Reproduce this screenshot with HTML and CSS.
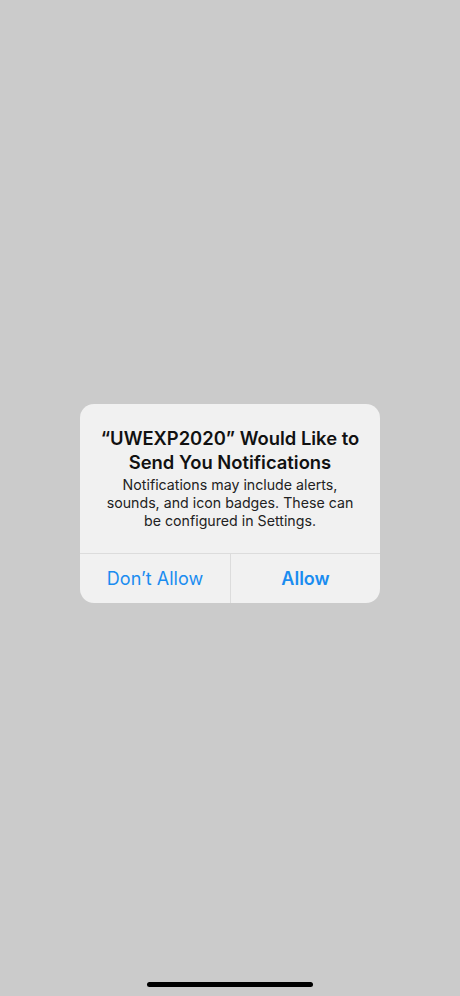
FILE: index.html
```html
<!DOCTYPE html>
<html lang="en">
<head>
    <meta charset="UTF-8">
    <meta name="viewport" content="width=device-width, initial-scale=1.0">
    <title>Notifications</title>
    <link rel="stylesheet" href="styles.css">
</head>
<body>
    <div class="screen">
        <div class="alert">
            <div class="alert-content">
                <h1 class="alert-title">“UWEXP2020” Would Like to Send You Notifications</h1>
                <p class="alert-message">Notifications may include alerts, sounds, and icon badges. These can be configured in Settings.</p>
            </div>
            <div class="alert-actions">
                <button class="alert-button">Don’t Allow</button>
                <button class="alert-button primary">Allow</button>
            </div>
        </div>
        <div class="home-indicator"></div>
    </div>
</body>
</html>
```

FILE: styles.css
```css
body {
    margin: 0;
    background: #cbcbcb;
    font-family: Inter, "Noto Sans", sans-serif;
}
.screen {
    height: 996px;
    display: flex;
    flex-direction: column;
    align-items: center;
}
.alert {
    margin-top: 404px;
    width: 300px;
    background: #f1f1f1;
    border-radius: 14px;
    overflow: hidden;
}
.alert-content {
    padding: 22px 18px 23px;
    text-align: center;
}
.alert-title {
    margin: 0 0 2px;
    font-size: 18.4px;
    line-height: 24px;
    font-weight: 600;
    color: #111;
}
.alert-message {
    margin: 0;
    font-size: 14.2px;
    line-height: 18px;
    color: #222;
}
.alert-actions {
    display: grid;
    grid-template-columns: 1fr 1fr;
    border-top: 1px solid #dcdcdc;
}
.alert-button {
    height: 49px;
    border: none;
    background: none;
    font-family: inherit;
    font-size: 18px;
    color: #1a8cf0;
    padding: 0;
}
.alert-button + .alert-button {
    border-left: 1px solid #dcdcdc;
}
.alert-button.primary {
    font-weight: 600;
}
.home-indicator {
    margin-top: auto;
    margin-bottom: 9px;
    width: 166px;
    height: 5px;
    border-radius: 3px;
    background: #000;
}
```
